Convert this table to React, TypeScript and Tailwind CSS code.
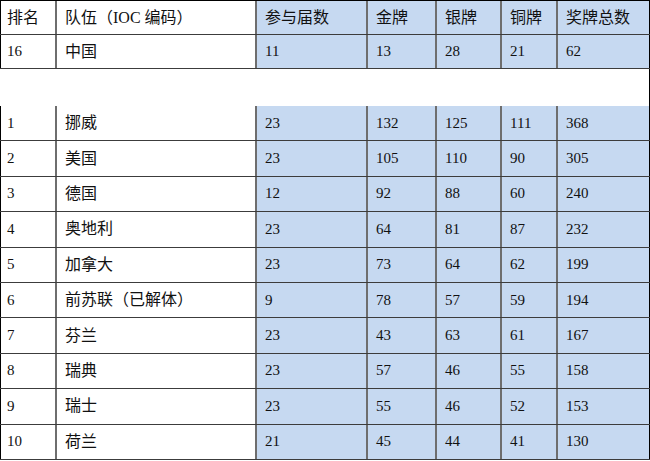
import React from "react";

const rows: string[][] = [
  ["1", "挪威", "23", "132", "125", "111", "368"],
  ["2", "美国", "23", "105", "110", "90", "305"],
  ["3", "德国", "12", "92", "88", "60", "240"],
  ["4", "奥地利", "23", "64", "81", "87", "232"],
  ["5", "加拿大", "23", "73", "64", "62", "199"],
  ["6", "前苏联（已解体）", "9", "78", "57", "59", "194"],
  ["7", "芬兰", "23", "43", "63", "61", "167"],
  ["8", "瑞典", "23", "57", "46", "55", "158"],
  ["9", "瑞士", "23", "55", "46", "52", "153"],
  ["10", "荷兰", "21", "45", "44", "41", "130"],
];

const widths = ["w-[55px]", "w-[200px]", "w-[111px]", "w-[69px]", "w-[65px]", "w-[56px]", "w-[94px]"];

function Row({ cells, h, top }: { cells: string[]; h: string; top?: boolean }) {
  return (
    <div className={`flex ${h} border-b border-[#3c3c3c] ${top ? "border-t border-t-black" : ""}`}>
      {cells.map((c, i) => (
        <div
          key={i}
          className={`${widths[i]} shrink-0 flex items-center ${i === 0 ? "pl-[6px] border-l border-l-black" : "pl-[8px] border-l-2 border-l-[#6e6e6e]"} ${i >= 2 ? "bg-[#c6d9f1]" : "bg-white"} ${i === 6 ? "border-r border-r-black" : ""}`}
        >
          <span className={/^\d+$/.test(c) ? "text-[15px]" : "text-[16px]"}>{c}</span>
        </div>
      ))}
    </div>
  );
}

export default function App() {
  return (
    <div
      className="w-[650px] h-[461px] bg-white text-[15px] text-[#111] leading-none overflow-hidden"
      style={{ fontFamily: '"Liberation Serif", "Noto Sans CJK SC", serif' }}
    >
      <Row cells={["排名", "队伍（IOC 编码）", "参与届数", "金牌", "银牌", "铜牌", "奖牌总数"]} h="h-[35px]" top />
      <Row cells={["16", "中国", "11", "13", "28", "21", "62"]} h="h-[34px]" />
      <div className="h-[37px] border-r border-r-black bg-white" />
      {rows.map((r) => (
        <Row key={r[0]} cells={r} h="h-[35.4px]" />
      ))}
    </div>
  );
}
